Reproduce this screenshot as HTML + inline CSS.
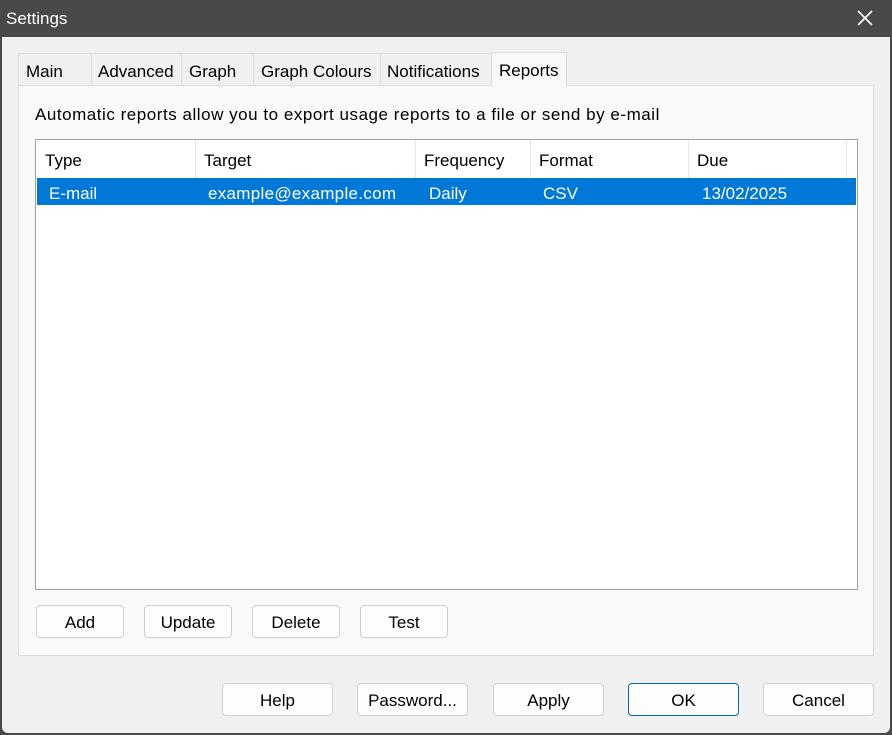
<!DOCTYPE html>
<html><head><style>
*{margin:0;padding:0;box-sizing:border-box}
body{width:892px;height:735px;overflow:hidden;background:#4a4947;font-family:"Liberation Sans",sans-serif;font-size:17px;color:#000;position:relative}
.a{position:absolute;white-space:nowrap}
#win{position:absolute;left:2px;top:37px;width:888px;height:696px;background:#f0f0f0;border-radius:0 0 6px 6px}
.tab{position:absolute;top:53px;height:32px;background:#f0f0f0;border:1px solid #dcdcdc;border-bottom:none;padding:8px 0 0 7px}
.btn{position:absolute;height:33px;background:#fdfdfd;border:1px solid #d0d0d0;border-radius:4px;text-align:center;line-height:33px}
.hd{position:absolute;top:140px;height:38px;border-right:1px solid #e5e5e5;padding:11px 0 0 8px}
</style></head><body>
<div class="a" style="left:6px;top:9px;color:#fff;font-size:17px">Settings</div>
<svg class="a" style="left:857px;top:10px" width="16" height="16"><path d="M1 1L15 15M15 1L1 15" stroke="#fff" stroke-width="1.6"/></svg>
<div id="win"></div>
<div class="a" style="left:18px;top:85px;width:856px;height:571px;background:#f9f9f9;border:1px solid #dcdcdc"></div>
<div class="tab" style="left:18px;width:74px">Main</div>
<div class="tab" style="left:91px;width:91px;padding-left:6px">Advanced</div>
<div class="tab" style="left:181px;width:73px">Graph</div>
<div class="tab" style="left:253px;width:128px">Graph Colours</div>
<div class="tab" style="left:380px;width:112px;padding-left:6px">Notifications</div>
<div class="tab" style="left:491px;top:52px;height:34px;width:76px;background:#f9f9f9;padding-top:8px">Reports</div>
<div class="a" style="left:35px;top:105px;letter-spacing:0.53px">Automatic reports allow you to export usage reports to a file or send by e-mail</div>
<div class="a" style="left:35px;top:139px;width:823px;height:451px;background:#fff;border:1px solid #a0a0a0"></div>
<div class="hd" style="left:37px;width:159px">Type</div>
<div class="hd" style="left:196px;width:220px">Target</div>
<div class="hd" style="left:416px;width:115px">Frequency</div>
<div class="hd" style="left:531px;width:158px">Format</div>
<div class="hd" style="left:689px;width:158px">Due</div>
<div class="a" style="left:37px;top:178px;width:819px;height:27px;background:#0078d7;color:#fff">
<span class="a" style="left:12px;top:6px">E-mail</span>
<span class="a" style="left:171px;top:6px;letter-spacing:0.3px">example@example.com</span>
<span class="a" style="left:392px;top:6px">Daily</span>
<span class="a" style="left:506px;top:6px">CSV</span>
<span class="a" style="left:665px;top:6px">13/02/2025</span>
</div>
<div class="btn" style="left:36px;top:605px;width:88px">Add</div>
<div class="btn" style="left:144px;top:605px;width:88px">Update</div>
<div class="btn" style="left:252px;top:605px;width:88px">Delete</div>
<div class="btn" style="left:360px;top:605px;width:88px">Test</div>
<div class="btn" style="left:222px;top:683px;width:111px">Help</div>
<div class="btn" style="left:357px;top:683px;width:111px">Password...</div>
<div class="btn" style="left:493px;top:683px;width:111px">Apply</div>
<div class="btn" style="left:628px;top:683px;width:111px;border-color:#0067c0">OK</div>
<div class="btn" style="left:763px;top:683px;width:111px">Cancel</div>
</body></html>
